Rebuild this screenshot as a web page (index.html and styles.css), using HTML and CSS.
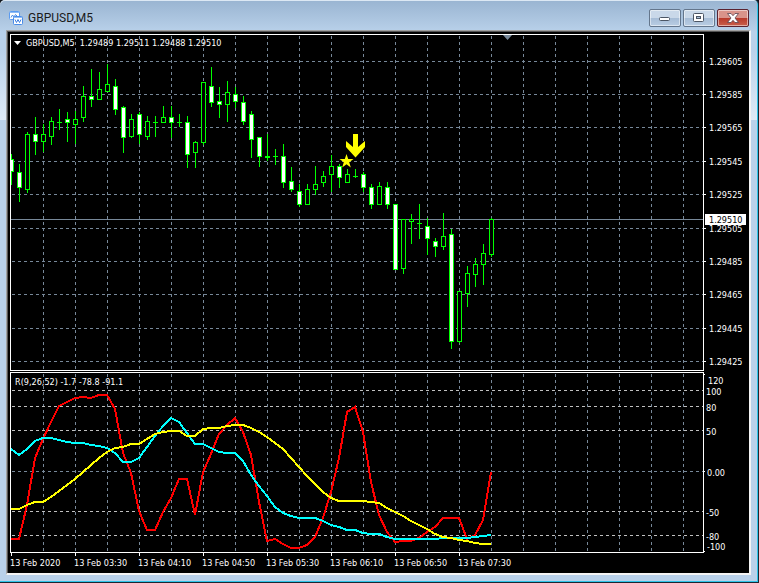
FILE: index.html
```html
<!DOCTYPE html>
<html lang="en">
<head>
    <meta charset="UTF-8">
    <meta name="viewport" content="width=device-width, initial-scale=1.0">
    <title>GBPUSD,M5</title>
    <link rel="stylesheet" href="styles.css">
</head>
<body>

    <div class="window">
        <!-- Title bar -->
        <header class="title-bar">
            <svg class="window-icon" width="14" height="14" viewBox="0 0 14 14">
                <rect x="0.5" y="0.5" width="10" height="8" rx="1" fill="#fff" stroke="#5b9bf0"/>
                <rect x="1" y="1" width="9" height="1" fill="#8fbcf5"/>
                <path d="M2 6.500l1.500-2.500 1.500 2 1.500-2.500 2 2" fill="none" stroke="#4a8ce8"/>
                <rect x="4.500" y="5.500" width="9" height="8" rx="1" fill="#fff" stroke="#4a8ce8"/>
                <rect x="5" y="6" width="8" height="1" fill="#8fbcf5"/>
                <path d="M6 8.500l1.500 3 1.500-3 1.500 3 1.500-3" fill="none" stroke="#3f7fe0"/>
            </svg>
            <h1 class="title">GBPUSD,M5</h1>
            <div class="controls">
                <button class="control" aria-label="Minimize">
                    <svg width="12" height="10" viewBox="0 0 12 10"><rect x="0.500" y="4.500" width="10" height="3" rx="1" fill="#fff" stroke="#4c5665"/></svg>
                </button>
                <button class="control" aria-label="Maximize">
                    <svg width="12" height="10" viewBox="0 0 12 10"><rect x="0.500" y="0.500" width="10" height="8" rx="1" fill="#fff" stroke="#4c5665"/><rect x="3.500" y="3.500" width="4" height="2" fill="#a9bfd8" stroke="#4c5665"/></svg>
                </button>
                <button class="control close" aria-label="Close">
                    <svg width="12" height="10" viewBox="0 0 12 10"><path d="M0.500 0.500h3.500l2 2.200 2-2.200h3.500l-3.500 4.500 3.500 4.500h-3.500l-2-2.200-2 2.200h-3.500l3.500-4.500z" fill="#fff" stroke="#5a4450" stroke-width="0.800"/></svg>
                </button>
            </div>
        </header>

        <main class="client">
            <!-- Price chart -->
            <section class="pane price-pane">
                <div class="plot">
                    <svg class="canvas" width="100%" height="100%">
                        <g id="price-chart" transform="translate(-11 -35)"></g>
                    </svg>
                    <p class="legend price-legend"><span class="arrow"></span>GBPUSD,M5&nbsp; 1.29489 1.29511 1.29488 1.29510</p>
                </div>
                <svg class="axis" id="price-axis"></svg>
            </section>

            <!-- Williams %R indicator -->
            <section class="pane indicator-pane">
                <div class="plot">
                    <svg class="canvas" width="100%" height="100%">
                        <g id="indicator-chart" transform="translate(-11 -373)"></g>
                    </svg>
                    <p class="legend">R(9,26,52) -1.7 -78.8 -91.1</p>
                </div>
                <svg class="axis" id="indicator-axis"></svg>
            </section>

            <svg class="time-axis" id="time-axis"></svg>
        </main>
    </div>

    <script>
        // high, top, bottom, low, filled
        const candles = [
            [154, 159, 171, 184, 1], [164, 172, 187, 201, 1], [132, 134, 189, 192, 0], [117, 134, 141, 154, 1],
            [124, 134, 141, 151, 0], [117, 121, 136, 144, 0], [109, 122, 122, 129, 0], [112, 119, 122, 141, 1],
            [111, 119, 124, 143, 0], [86, 96, 117, 121, 0], [69, 96, 99, 106, 1], [72, 89, 99, 99, 0],
            [64, 84, 91, 91, 0], [79, 86, 109, 114, 1], [106, 107, 137, 152, 1], [114, 119, 136, 137, 0],
            [112, 114, 134, 143, 1], [116, 121, 136, 139, 0], [116, 122, 122, 136, 0], [106, 117, 122, 122, 0],
            [106, 117, 122, 137, 1], [114, 122, 122, 126, 0], [116, 122, 154, 167, 1], [141, 142, 152, 167, 0],
            [82, 82, 142, 144, 0], [67, 86, 102, 106, 1], [87, 101, 104, 117, 1], [81, 92, 104, 121, 0],
            [87, 94, 101, 107, 1], [96, 102, 121, 124, 1], [111, 114, 139, 157, 1], [137, 137, 156, 166, 1],
            [134, 156, 157, 160, 0], [149, 156, 156, 164, 0], [144, 156, 182, 187, 1], [167, 181, 189, 191, 1],
            [184, 191, 204, 206, 1], [184, 189, 204, 204, 0], [166, 184, 189, 194, 0], [171, 176, 182, 186, 0],
            [155, 166, 174, 191, 0], [164, 166, 177, 187, 1], [169, 174, 182, 182, 0], [169, 176, 176, 177, 0],
            [172, 174, 187, 191, 1], [184, 187, 204, 208, 1], [182, 186, 204, 204, 0], [182, 187, 204, 208, 1],
            [204, 204, 269, 269, 1], [219, 219, 268, 273, 0], [214, 219, 221, 243, 0], [204, 223, 223, 238, 0],
            [218, 226, 238, 254, 1], [238, 241, 246, 256, 1], [213, 236, 246, 249, 0], [229, 234, 341, 348, 1],
            [291, 291, 341, 342, 0], [266, 273, 293, 306, 0], [258, 264, 274, 286, 0], [244, 253, 264, 284, 0],
            [218, 219, 254, 256, 0]
        ];

        const red = [539, 539, 505, 458, 439, 422, 406, 402, 398, 397, 398, 395, 395, 409, 453, 473, 511, 530, 530, 512,
            498, 479, 479, 515, 472, 454, 434, 425, 418, 432, 455, 502, 541, 539, 544, 548, 548, 545, 537, 518, 492,
            458, 412, 407, 432, 482, 515, 532, 542, 541, 541, 538, 532, 527, 518, 518, 518, 539, 535, 520, 472];
        const cyan = [449, 455, 449, 441, 438, 438, 440, 442, 443, 443, 445, 446, 448, 453, 462, 462, 458, 447, 436, 426,
            418, 422, 433, 444, 444, 448, 452, 453, 453, 461, 475, 486, 496, 507, 513, 516, 518, 518, 518, 521, 525,
            527, 530, 530, 533, 534, 534, 537, 539, 539, 539, 539, 539, 539, 538, 538, 538, 538, 537, 536, 535];
        const yellow = [509, 509, 505, 502, 502, 497, 491, 485, 479, 472, 465, 458, 452, 448, 447, 444, 444, 439, 434, 432,
            431, 431, 436, 436, 429, 428, 428, 426, 425, 425, 428, 432, 437, 443, 449, 458, 467, 476, 484, 492, 498,
            501, 501, 501, 501, 502, 503, 508, 512, 516, 521, 525, 529, 534, 537, 538, 540, 541, 543, 544, 544];

        const priceRows = [61, 94, 127, 161, 194, 228, 261, 294, 328, 361];
        const step = 8;
        const left = 11;

        function vline(x, y1, y2, cls) {
            return `<line class="${cls}" x1="${x + 0.5}" x2="${x + 0.5}" y1="${y1}" y2="${y2}"/>`;
        }

        function hline(y, x1, x2, cls) {
            return `<line class="${cls}" x1="${x1}" x2="${x2}" y1="${y + 0.5}" y2="${y + 0.5}"/>`;
        }

        function columns(y1, y2) {
            let out = "";
            for (let x = 43; x < 2600; x += 32) out += vline(x, y1, y2, "grid");
            return out;
        }

        function drawPrice() {
            let out = columns(36, 370);
            priceRows.forEach(y => out += hline(y, 12, 2600, "grid"));
            out += hline(219, 11, 2600, "bid");
            candles.forEach(([high, top, bottom, low, filled], i) => {
                const x = left + i * step;
                out += vline(x, high, low + 1, "wick");
                if (bottom - top < 2) {
                    out += `<rect class="doji" x="${x - 2}" y="${top}" width="5" height="${bottom - top + 1}"/>`;
                } else {
                    out += `<rect class="candle ${filled ? "down" : "up"}" x="${x - 1.5}" y="${top + 0.5}" width="4" height="${bottom - top}"/>`;
                }
            });
            // sell signal
            out += `<path class="signal" d="M353 134h5v13l7-6v6l-9.500 10.500l-9.500-10.500v-6l7 6z"/>`;
            out += `<path class="signal" d="M346.500 154l1.700 5h5.300l-4.300 3.200l1.600 5.300l-4.300-3.200l-4.300 3.200l1.600-5.300l-4.300-3.200h5.300z"/>`;
            out += `<path class="shift" d="M503 35h9l-4.500 5z"/>`;
            document.getElementById("price-chart").innerHTML = out;
        }

        function drawLine(values, cls) {
            const points = values.map((y, i) => `${left + i * step},${y}`).join(" ");
            return `<polyline class="${cls}" points="${points}"/>`;
        }

        function drawIndicator() {
            let out = columns(374, 552);
            [390, 406, 430, 511, 535].forEach(y => out += hline(y, 12, 2600, "level"));
            out += hline(471, 12, 2600, "grid");
            out += drawLine(red, "red") + drawLine(cyan, "cyan") + drawLine(yellow, "yellow");
            document.getElementById("indicator-chart").innerHTML = out;
        }

        function drawAxes() {
            let out = "";
            priceRows.forEach((y, i) => {
                out += hline(y - 34, 0, 2, "tick") + `<text x="5" y="${y - 30}">${(1.29605 - i * 0.0002).toFixed(5)}</text>`;
            });
            out += `<rect class="bid-box" x="1" y="180" width="41" height="11"/><text class="bid-text" x="5" y="189">1.29510</text>`;
            document.getElementById("price-axis").innerHTML = out;

            const levels = [["120", 380, 4], ["100", 391, 2], ["80", 407, 2], ["50", 431, 2], ["0.00", 472, 3], ["-50", 512, 2], ["-80", 536, 2], ["-100", 546, 3]];
            document.getElementById("indicator-axis").innerHTML =
                levels.map(([label, y, x]) => `<text x="${x}" y="${y - 368}">${label}</text>`).join("") +
                [374, 471, 551].map(y => hline(y - 372, 0, 1, "tick")).join("");

            const times = ["2020", "03:30", "04:10", "04:50", "05:30", "06:10", "06:50", "07:30"];
            document.getElementById("time-axis").innerHTML =
                times.map((t, i) => vline(1 + i * 64, 0, 3, "tick") + `<text x="${i * 64}" y="13">13 Feb ${t}</text>`).join("");
        }

        drawPrice();
        drawIndicator();
        drawAxes();
    </script>

</body>
</html>
```
FILE: styles.css
```css
/* General Styles */
* {
    box-sizing: border-box;
}

body {
    margin: 0;
    background: #10151c;
    font-family: "DejaVu Sans Condensed", "DejaVu Sans", sans-serif;
    font-size: 9px;
    color: #fff;
}

/* Window Frame */
.window {
    padding: 0 7px 7px 6px;
    border: solid #1c2733;
    border-width: 0 1px 1px 0;
    border-radius: 5px 5px 0 0;
    background: linear-gradient(#99b4d1, #b9d1ea 32px, #b9d1ea 50px, #dfebf7 120px, #b9d1ea 120px);
    box-shadow: inset -1px -1px #2fc4e8, inset 0 1px #dce8f4;
}

/* Title Bar */
.title-bar {
    display: flex;
    align-items: center;
    height: 30px;
    padding: 6px 2px 0 3px;
}

.window-icon {
    margin-right: 5px;
}

.title {
    flex: 1;
    margin: 0;
    font: 12px/16px Roboto, sans-serif;
    color: #1a1a1a;
}

.controls {
    display: flex;
    gap: 2px;
}

.control {
    display: flex;
    align-items: center;
    justify-content: center;
    width: 32px;
    height: 18px;
    padding: 0;
    border: 1px solid #64768c;
    border-radius: 2px;
    background: linear-gradient(#c9d8e9 50%, #a5bcd6 50%, #b9cde3);
    box-shadow: inset 0 0 0 1px rgba(255, 255, 255, 0.5);
}

.close {
    border-color: #5a2330;
    background: linear-gradient(#d9938a 50%, #b8382a 50%, #c9604c);
}

/* Client Area */
.client {
    padding: 3px 0 0 3px;
    border: solid #f4f4f4;
    border-width: 1px 2px 2px 1px;
    border-left-color: #a0a0a0;
    border-top-color: #a0a0a0;
    background: #000;
    box-shadow: inset 1px 1px #555;
}

.pane {
    display: flex;
}

.price-pane {
    height: 337px;
    margin-bottom: 1px;
}

.indicator-pane {
    height: 181px;
}

.plot {
    position: relative;
    flex: 1;
    border: 1px solid #fff;
}

.canvas {
    display: block;
    overflow: hidden;
}

.axis {
    width: 45px;
    height: 100%;
}

.time-axis {
    display: block;
    width: 100%;
    height: 20px;
}

text {
    fill: #fff;
}

/* Legends over the plots */
.legend {
    position: absolute;
    top: 3px;
    left: 4px;
    display: flex;
    align-items: center;
    margin: 0;
    line-height: 12px;
    white-space: nowrap;
}

.price-legend {
    top: 2px;
    left: 3px;
}

.arrow {
    width: 7px;
    height: 4px;
    margin-right: 5px;
    background: #fff;
    clip-path: polygon(0 0, 100% 0, 50% 100%);
}

/* Chart Lines */
.grid,
.level {
    stroke: #778899;
    stroke-dasharray: 3 3;
    shape-rendering: crispEdges;
}

.level {
    stroke: #c0c0c0;
}

.bid {
    stroke: #778899;
}

.tick {
    stroke: #fff;
}

.wick {
    stroke: #00ff00;
    shape-rendering: crispEdges;
}

.doji {
    fill: #00ff00;
}

.candle {
    stroke: #00ff00;
    shape-rendering: crispEdges;
}

.up {
    fill: #000;
}

.down {
    fill: #fff;
}

.signal {
    fill: #ffff00;
}

.shift {
    fill: #778899;
}

.bid-box {
    fill: #fff;
}

.bid-text {
    fill: #000;
}

/* Indicator Lines */
.red,
.cyan,
.yellow {
    fill: none;
    stroke-width: 2;
    shape-rendering: crispEdges;
}

.red {
    stroke: #ff0000;
}

.cyan {
    stroke: #00ffff;
}

.yellow {
    stroke: #ffff00;
}
```
